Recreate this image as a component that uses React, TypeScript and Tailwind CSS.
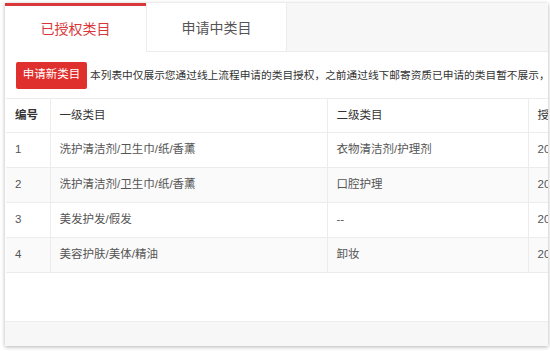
import React from "react";

const rows = [
  { id: 1, first: "洗护清洁剂/卫生巾/纸/香薰", second: "衣物清洁剂/护理剂", date: "2019-03-12 10:21:33" },
  { id: 2, first: "洗护清洁剂/卫生巾/纸/香薰", second: "口腔护理", date: "2019-03-12 10:21:33" },
  { id: 3, first: "美发护发/假发", second: "--", date: "2019-03-15 14:08:51" },
  { id: 4, first: "美容护肤/美体/精油", second: "卸妆", date: "2019-03-18 09:42:17" },
];

const App: React.FC = () => {
  return (
    <div className="w-[550px] h-[351px] bg-white pt-[3px] pl-[5px] overflow-hidden font-['Liberation_Sans','Noto_Sans_CJK_SC',sans-serif]">
      <div className="w-[543px] h-[343px] bg-white shadow-[0_1px_4px_rgba(0,0,0,0.3)] overflow-hidden flex flex-col">
        {/* tabs */}
        <div className="flex h-[49px] bg-[#f7f7f7] border-b border-[#ececec] shrink-0">
          <div className="w-[141px] bg-white border-t-[3px] border-[#d9383a] flex items-center justify-center pt-[1px] text-[14px] text-[#d9383a] -mb-px">
            已授权类目
          </div>
          <div className="w-[141px] bg-white border-l border-r border-[#ececec] flex items-center justify-center pt-[3px] text-[14px] text-[#555]">
            申请中类目
          </div>
        </div>

        {/* actions */}
        <div className="flex items-center h-[46px] pl-[11px] shrink-0 whitespace-nowrap">
          <button className="h-[27px] w-[71px] bg-[#e0302d] text-white text-[11.5px] rounded-[2px] shrink-0">
            申请新类目
          </button>
          <span className="ml-[3px] text-[10.7px] text-[#333]">
            本列表中仅展示您通过线上流程申请的类目授权，之前通过线下邮寄资质已申请的类目暂不展示，但可联系客服查询。
          </span>
        </div>

        {/* table */}
        <div className="flex-1 flex flex-col">
          <table className="w-[640px] ml-px border-collapse text-[11.5px] text-[#555] table-fixed">
            <colgroup>
              <col className="w-[44px]" />
              <col className="w-[277px]" />
              <col className="w-[201px]" />
              <col className="w-[118px]" />
            </colgroup>
            <thead>
              <tr className="h-[34px] border-t border-b border-[#ececec] text-[#333] text-left">
                <th className="pl-[9px] font-bold">编号</th>
                <th className="pl-[9px] font-normal border-l border-[#ececec]">一级类目</th>
                <th className="pl-[9px] font-normal border-l border-[#ececec]">二级类目</th>
                <th className="pl-[9px] font-normal border-l border-[#ececec] whitespace-nowrap">授权时间</th>
              </tr>
            </thead>
            <tbody>
              {rows.map((r, i) => (
                <tr
                  key={r.id}
                  className={`h-[35px] border-b border-[#ececec] ${i % 2 === 1 ? "bg-[#fafafa]" : "bg-white"}`}
                >
                  <td className="pl-[9px]">{r.id}</td>
                  <td className="pl-[9px] border-l border-[#ececec]">{r.first}</td>
                  <td className="pl-[9px] border-l border-[#ececec]">{r.second}</td>
                  <td className="pl-[9px] border-l border-[#ececec] whitespace-nowrap">{r.date}</td>
                </tr>
              ))}
            </tbody>
          </table>
          <div className="flex-1" />
          <div className="h-[25px] bg-[#f7f7f7] border-t border-[#ececec] shrink-0" />
        </div>
      </div>
    </div>
  );
};

export default App;
